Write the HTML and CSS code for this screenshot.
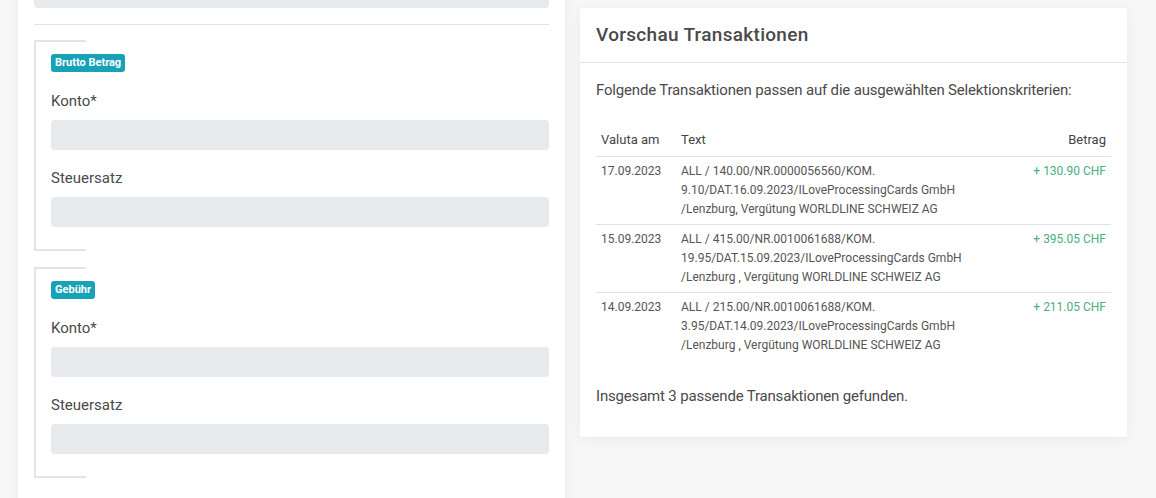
FILE: index.html
```html
<!DOCTYPE html>
<html lang="de">
<head>
<meta charset="utf-8">
<title>Vorschau Transaktionen</title>
<link rel="stylesheet" href="styles.css">
</head>
<body>
<div class="page">
  <section class="form-panel">
    <div class="input"></div>
    <hr class="divider">
    <div class="group">
      <span class="badge">Brutto Betrag</span>
      <label class="label">Konto*</label>
      <div class="input"></div>
      <label class="label">Steuersatz</label>
      <div class="input"></div>
    </div>
    <div class="group">
      <span class="badge">Gebühr</span>
      <label class="label">Konto*</label>
      <div class="input"></div>
      <label class="label">Steuersatz</label>
      <div class="input"></div>
    </div>
  </section>
  <section class="card">
    <header class="card-header">Vorschau Transaktionen</header>
    <div class="card-body">
      <p class="intro">Folgende Transaktionen passen auf die ausgewählten Selektionskriterien:</p>
      <table class="tx">
        <colgroup><col class="c-date"><col><col class="c-amount"></colgroup>
        <thead>
          <tr><th>Valuta am</th><th>Text</th><th class="right">Betrag</th></tr>
        </thead>
        <tbody>
          <tr>
            <td>17.09.2023</td>
            <td>ALL / 140.00/NR.0000056560/KOM.<br>9.10/DAT.16.09.2023/ILoveProcessingCards GmbH<br>/Lenzburg, Vergütung WORLDLINE SCHWEIZ AG</td>
            <td class="right amount">+ 130.90 CHF</td>
          </tr>
          <tr>
            <td>15.09.2023</td>
            <td>ALL / 415.00/NR.0010061688/KOM.<br>19.95/DAT.15.09.2023/ILoveProcessingCards GmbH<br>/Lenzburg , Vergütung WORLDLINE SCHWEIZ AG</td>
            <td class="right amount">+ 395.05 CHF</td>
          </tr>
          <tr>
            <td>14.09.2023</td>
            <td>ALL / 215.00/NR.0010061688/KOM.<br>3.95/DAT.14.09.2023/ILoveProcessingCards GmbH<br>/Lenzburg , Vergütung WORLDLINE SCHWEIZ AG</td>
            <td class="right amount">+ 211.05 CHF</td>
          </tr>
        </tbody>
      </table>
      <p class="summary">Insgesamt 3 passende Transaktionen gefunden.</p>
    </div>
  </section>
</div>
</body>
</html>
```
FILE: styles.css
```css
* { box-sizing: border-box; }
html, body { margin: 0; padding: 0; }
body {
  background: #f7f7f7;
  font-family: Roboto, "Noto Sans", sans-serif;
  color: #4a4a4a;
  overflow: hidden;
}
.page {
  display: flex;
  align-items: flex-start;
  gap: 15px;
  padding-left: 18px;
}
.form-panel {
  width: 547px;
  background: #fff;
  margin-top: -22px;
  padding: 0 16px 40px;
  min-height: 560px;
  box-shadow: 0 0 12px rgba(0,0,0,0.06);
}
.input {
  height: 30px;
  background: #e8ebee;
  border-radius: 4px;
}
.divider {
  border: 0;
  border-top: 1px solid #e4e4e4;
  margin: 16px 0 15px;
}
.group {
  border-left: 2px solid #e1e4e8;
  padding: 0 0 0 15px;
  margin-bottom: 16px;
}
.group::before,
.group::after {
  content: "";
  display: block;
  width: 52px;
  height: 2px;
  background: #e1e4e8;
  margin-left: -17px;
}
.group::before { margin-bottom: 12px; }
.group::after { margin-top: 22px; }
.badge {
  display: block;
  width: max-content;
  background: #17a2b8;
  color: #fff;
  font-size: 11px;
  font-weight: 700;
  line-height: 18px;
  height: 18px;
  padding: 0 4px;
  border-radius: 3px;
}
.label {
  display: block;
  font-size: 15px;
  line-height: 22px;
  color: #4a4a4a;
  margin: 18px 0 8px;
}
.input + .label { margin-top: 17px; }
.card {
  width: 547px;
  margin-top: 8px;
  background: #fff;
  border-radius: 3px;
  box-shadow: 0 2px 14px rgba(0,0,0,0.06);
}
.card-header {
  padding: 16px;
  font-size: 19px;
  line-height: 22px;
  font-weight: 500;
  letter-spacing: 0.3px;
  color: #4a4a4a;
  border-bottom: 1px solid #e3e3e3;
}
.card-body {
  padding: 16px 16px 30px;
}
.intro, .summary {
  margin: 0;
  font-size: 15px;
  line-height: 22px;
  color: #4a4a4a;
  letter-spacing: -0.18px;
}
.intro { margin-bottom: 23px; }
.summary { margin-top: 25px; }
.tx {
  width: 100%;
  border-collapse: collapse;
  table-layout: fixed;
}
.c-date { width: 80px; }
.c-amount { width: 130px; }
.tx th {
  font-size: 13px;
  font-weight: 400;
  text-align: left;
  color: #444;
  line-height: 20px;
  padding: 6px 5px;
  border-bottom: 1px solid #e2e2e6;
}
.tx td {
  font-size: 12px;
  line-height: 19px;
  color: #555;
  padding: 5px 5px;
  vertical-align: top;
  border-bottom: 1px solid #e2e2e6;
}
.tx tbody tr:last-child td { border-bottom: 0; }
.tx .right { text-align: right; }
.tx .amount { color: #4aae80; }
```
